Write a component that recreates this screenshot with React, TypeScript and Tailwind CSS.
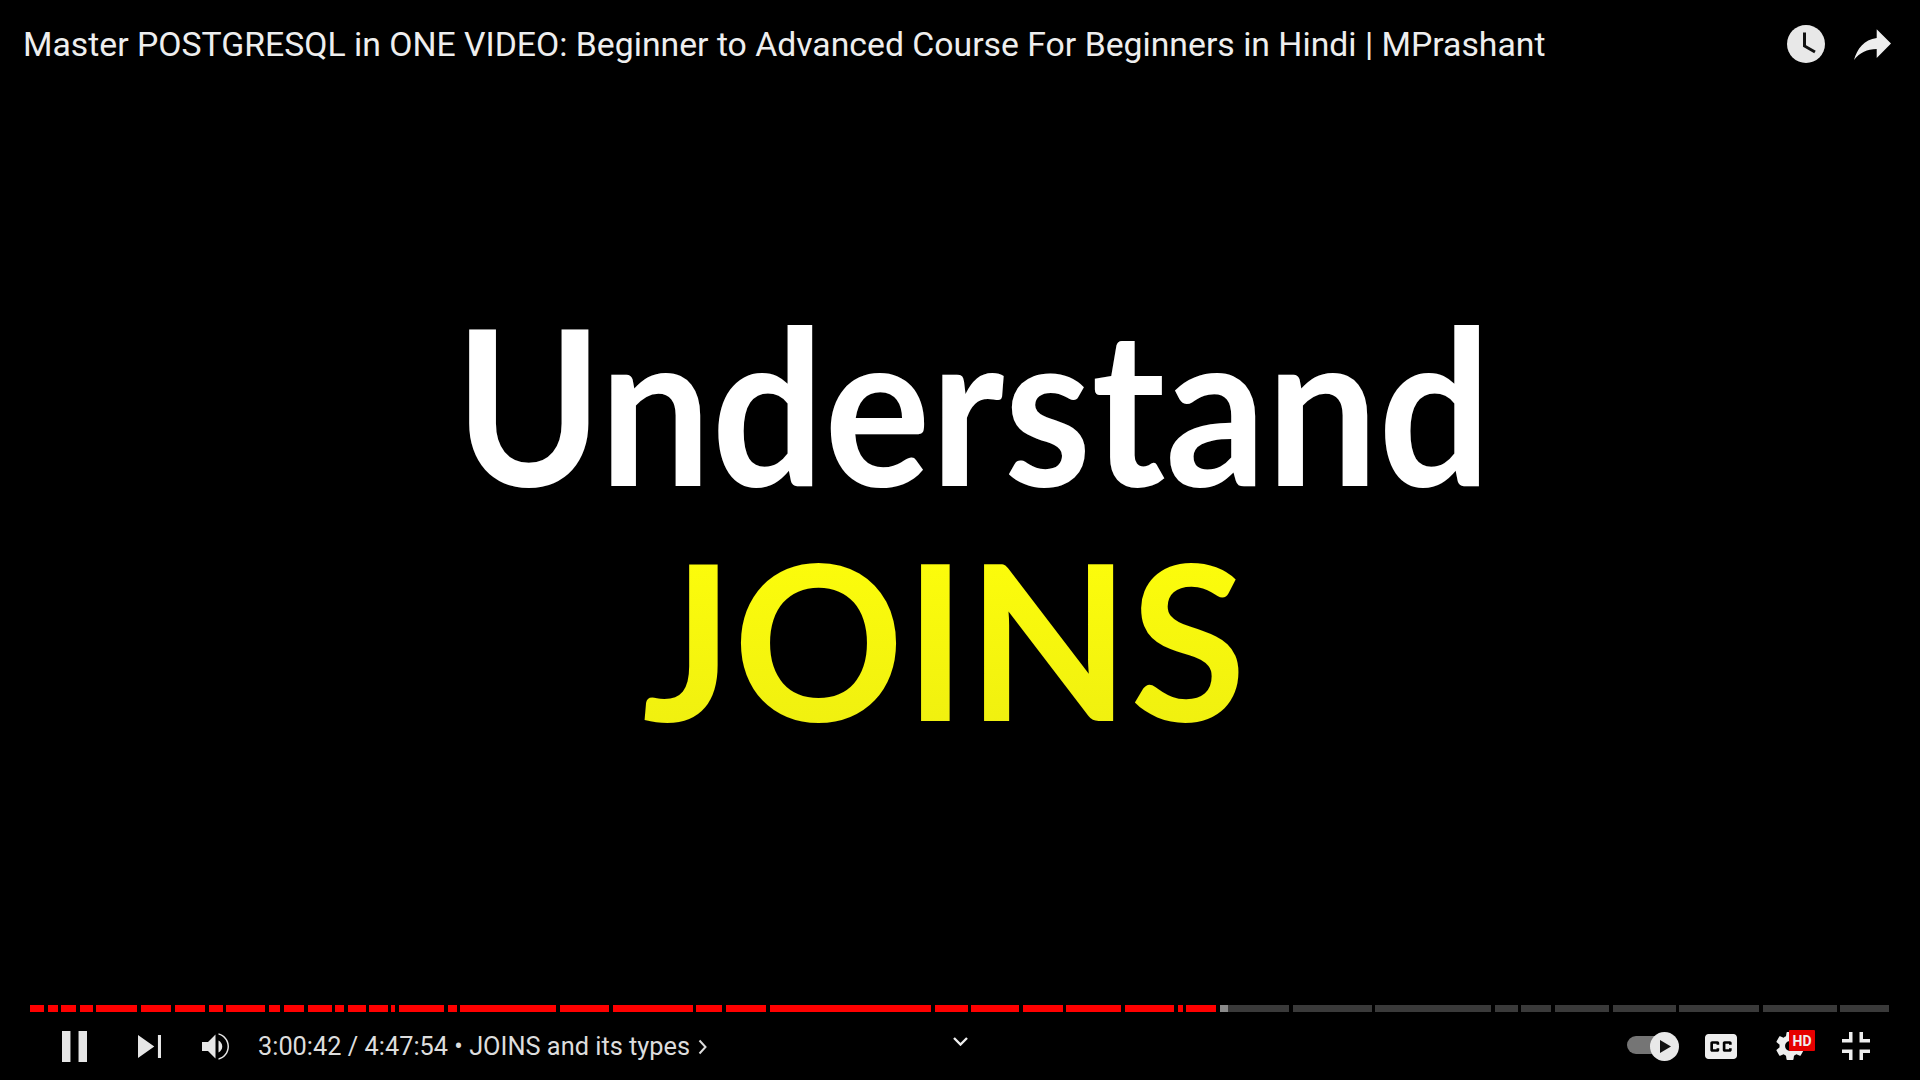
const segments: [number, number][] = [
  [30, 44], [48, 58], [61, 76], [80, 93], [96, 137], [141, 171], [175, 205], [209, 223], [226, 265], [269, 280],
  [284, 304], [308, 332], [335, 344], [348, 366], [369, 388], [391, 395], [399, 444], [448, 457], [460, 556], [560, 609],
  [613, 693], [696, 722], [726, 766], [770, 931], [935, 968], [971, 1019], [1023, 1063], [1066, 1121], [1125, 1174], [1178, 1183],
  [1186, 1216],
];
const rest: [number, number][] = [
  [1293, 1372], [1375, 1491], [1495, 1518], [1521, 1551], [1555, 1609], [1613, 1676], [1679, 1759], [1763, 1837], [1840, 1889],
];

function ProgressBar() {
  let prev = 0;
  return (
    <div className="flex h-[7px] shrink-0">
      {segments.map(([a, b]) => {
        const ml = a - prev;
        prev = b;
        return <div key={a} className="h-full bg-[#ff0000]" style={{ marginLeft: ml, width: b - a }} />;
      })}
      <div className="ml-[4px] flex h-full w-[69px] bg-[#3a3a3a]">
        <div className="h-full w-[8px] bg-[#8a8a8a]" />
      </div>
      {rest.map(([a, b], i) => {
        const ml = a - (i === 0 ? 1289 : rest[i - 1][1]);
        return <div key={a} className="h-full bg-[#3a3a3a]" style={{ marginLeft: ml, width: b - a }} />;
      })}
    </div>
  );
}

export default function App() {
  return (
    <div className="flex h-[1080px] w-[1920px] flex-col overflow-hidden bg-black font-['Roboto',sans-serif] text-[#eeeeee]">
      <div className="flex h-[88px] shrink-0 items-center pl-[23px]">
        <div className="mt-[2px] w-[1764px] text-[33.75px] leading-none whitespace-nowrap">
          Master POSTGRESQL in ONE VIDEO: Beginner to Advanced Course For Beginners in Hindi | MPrashant
        </div>
        <svg viewBox="0 0 38 38" className="h-[38px] w-[38px]">
          <circle cx="19" cy="19" r="19" fill="#e8e8e8" />
          <path d="M17.5 7.5V21L28 27" fill="none" stroke="#111" strokeWidth="3" />
        </svg>
        <svg viewBox="94 29 37 31" className="ml-[29px] h-[31px] w-[37px]">
          <path d="M131 43.5 116.7 29.3V38C104 39.5 97 49 94 60 100 52.5 107 49 116.7 49V58Z" fill="#eeeeee" />
        </svg>
      </div>

      <div className="flex flex-1 flex-col items-center font-['Lato',sans-serif] font-bold leading-none">
        <div className="mt-[195px] ml-[26px] scale-x-[0.92] text-[216px] leading-[240px] text-white">Understand</div>
        <div className="mt-[-5px] mr-[32px] scale-x-[0.98] bg-linear-to-b from-[#ffff0a] to-[#eeee10] bg-clip-text text-[216px] leading-[240px] text-transparent">
          JOINS
        </div>
      </div>

      <ProgressBar />

      <div className="flex h-[68px] shrink-0 items-center text-[#dddddd]">
        <svg viewBox="12 10 13 16" className="ml-[62px] h-[31px] w-[25px]">
          <path d="M12 26h4.4V10H12zM20.6 26H25V10h-4.4z" fill="#e6e6e6" />
        </svg>
        <svg viewBox="12 12 12 12" className="ml-[51px] h-[23px] w-[23px]">
          <path d="M12 24 20.5 18 12 12V24ZM22.4 12V24H24V12Z" fill="#e6e6e6" />
        </svg>
        <svg viewBox="8 9 18 18" className="ml-[41px] h-[27px] w-[27px]">
          <path d="M8 21H12L17 26V10L12 15H8V21ZM19 14V22C20.48 21.32 21.5 19.77 21.5 18 21.5 16.26 20.48 14.74 19 14Z" fill="#e6e6e6" />
          <path d="M19 10.2C22.4 11 25 14.2 25 18 25 21.8 22.4 25 19 25.8V26.8C23 25.9 26 22.3 26 18 26 13.7 23 10.1 19 9.2Z" fill="#e6e6e6" />
        </svg>
        <div className="mt-[2px] ml-[29px] text-[25.35px] leading-none whitespace-nowrap">3:00:42 / 4:47:54 • JOINS and its types</div>
        <svg viewBox="0 0 9 16" className="mt-[1px] ml-[8px] h-[16px] w-[9px]">
          <path d="M1.5 1.5 7.5 8 1.5 14.5" fill="none" stroke="#dddddd" strokeWidth="2" />
        </svg>
        <svg viewBox="0 0 15 9" className="mb-[10px] ml-[246px] h-[9px] w-[15px]">
          <path d="M1 1 7.5 7.5 14 1" fill="none" stroke="#eeeeee" strokeWidth="2.4" />
        </svg>
        <div className="relative ml-[659px] h-[29px] w-[52px]">
          <div className="mt-[4px] h-[18px] w-[38px] rounded-full bg-[#757575]" />
          <svg viewBox="0 0 29 29" className="absolute top-0 right-0 h-[29px] w-[29px]">
            <circle cx="14.5" cy="14.5" r="14.5" fill="#e8e8e8" />
            <path d="M10 8 21 14.5 10 21Z" fill="#111" />
          </svg>
        </div>
        <svg viewBox="9 11 18 14" className="ml-[26px] h-[25px] w-[32px]">
          <path
            fill="#eeeeee"
            d="M11,11 C9.89,11 9,11.9 9,13 L9,23 C9,24.1 9.89,25 11,25 L25,25 C26.1,25 27,24.1 27,23 L27,13 C27,11.9 26.1,11 25,11 L11,11 Z M17,17 L15.5,17 L15.5,16.5 L13.5,16.5 L13.5,19.5 L15.5,19.5 L15.5,19 L17,19 L17,20 C17,20.55 16.55,21 16,21 L13,21 C12.45,21 12,20.55 12,20 L12,16 C12,15.45 12.45,15 13,15 L16,15 C16.55,15 17,15.45 17,16 L17,17 Z M24,17 L22.5,17 L22.5,16.5 L20.5,16.5 L20.5,19.5 L22.5,19.5 L22.5,19 L24,19 L24,20 C24,20.55 23.55,21 23,21 L20,21 C19.45,21 19,20.55 19,20 L19,16 C19,15.45 19.45,15 20,15 L23,15 C23.55,15 24,15.45 24,16 L24,17 Z"
          />
        </svg>
        <div className="relative ml-[39px] h-[28px] w-[28px]">
          <svg viewBox="10 10 16 16" className="h-[28px] w-[28px]">
            <path
              fill="#eeeeee"
              d="m 23.94,18.78 c .03,-0.25 .05,-0.51 .05,-0.78 0,-0.27 -0.02,-0.52 -0.05,-0.78 l 1.68,-1.32 c .15,-0.12 .19,-0.33 .09,-0.51 l -1.6,-2.76 c -0.09,-0.17 -0.31,-0.24 -0.48,-0.17 l -1.99,.8 c -0.41,-0.32 -0.86,-0.58 -1.35,-0.78 l -0.30,-2.12 c -0.02,-0.19 -0.19,-0.33 -0.39,-0.33 l -3.2,0 c -0.2,0 -0.36,.14 -0.39,.33 l -0.30,2.12 c -0.48,.2 -0.93,.47 -1.35,.78 l -1.99,-0.8 c -0.18,-0.07 -0.39,0 -0.48,.17 l -1.6,2.76 c -0.10,.17 -0.05,.39 .09,.51 l 1.68,1.32 c -0.03,.25 -0.05,.52 -0.05,.78 0,.26 .02,.52 .05,.78 l -1.68,1.32 c -0.15,.12 -0.19,.33 -0.09,.51 l 1.6,2.76 c .09,.17 .31,.24 .48,.17 l 1.99,-0.8 c .41,.32 .86,.58 1.35,.78 l .30,2.12 c .02,.19 .19,.33 .39,.33 l 3.2,0 c .2,0 .36,-0.14 .39,-0.33 l .30,-2.12 c .48,-0.2 .93,-0.47 1.35,-0.78 l 1.99,.8 c .18,.07 .39,0 .48,-0.17 l 1.6,-2.76 c .09,-0.17 .05,-0.39 -0.09,-0.51 l -1.68,-1.32 0,0 z m -5.94,2.01 c -1.54,0 -2.8,-1.25 -2.8,-2.8 0,-1.54 1.25,-2.8 2.8,-2.8 1.54,0 2.8,1.25 2.8,2.8 0,1.54 -1.25,2.8 -2.8,2.8 l 0,0 z"
            />
          </svg>
          <div className="absolute top-[-2px] left-[13px] flex h-[21px] w-[26px] items-center justify-center rounded-[1px] bg-[#e60000] text-[14px] leading-none font-bold text-[#eeeeee]">
            HD
          </div>
        </div>
        <svg viewBox="10 10 16 16" className="ml-[38px] h-[28px] w-[28px]">
          <path
            fill="#eeeeee"
            d="m14 14-4 0 0 2 6 0 0-6-2 0 0 4zM22 14l0-4-2 0 0 6 6 0 0-2-4 0zM20 26l2 0 0-4 4 0 0-2-6 0 0 6zM10 22l4 0 0 4 2 0 0-6-6 0 0 2z"
          />
        </svg>
      </div>
    </div>
  );
}
